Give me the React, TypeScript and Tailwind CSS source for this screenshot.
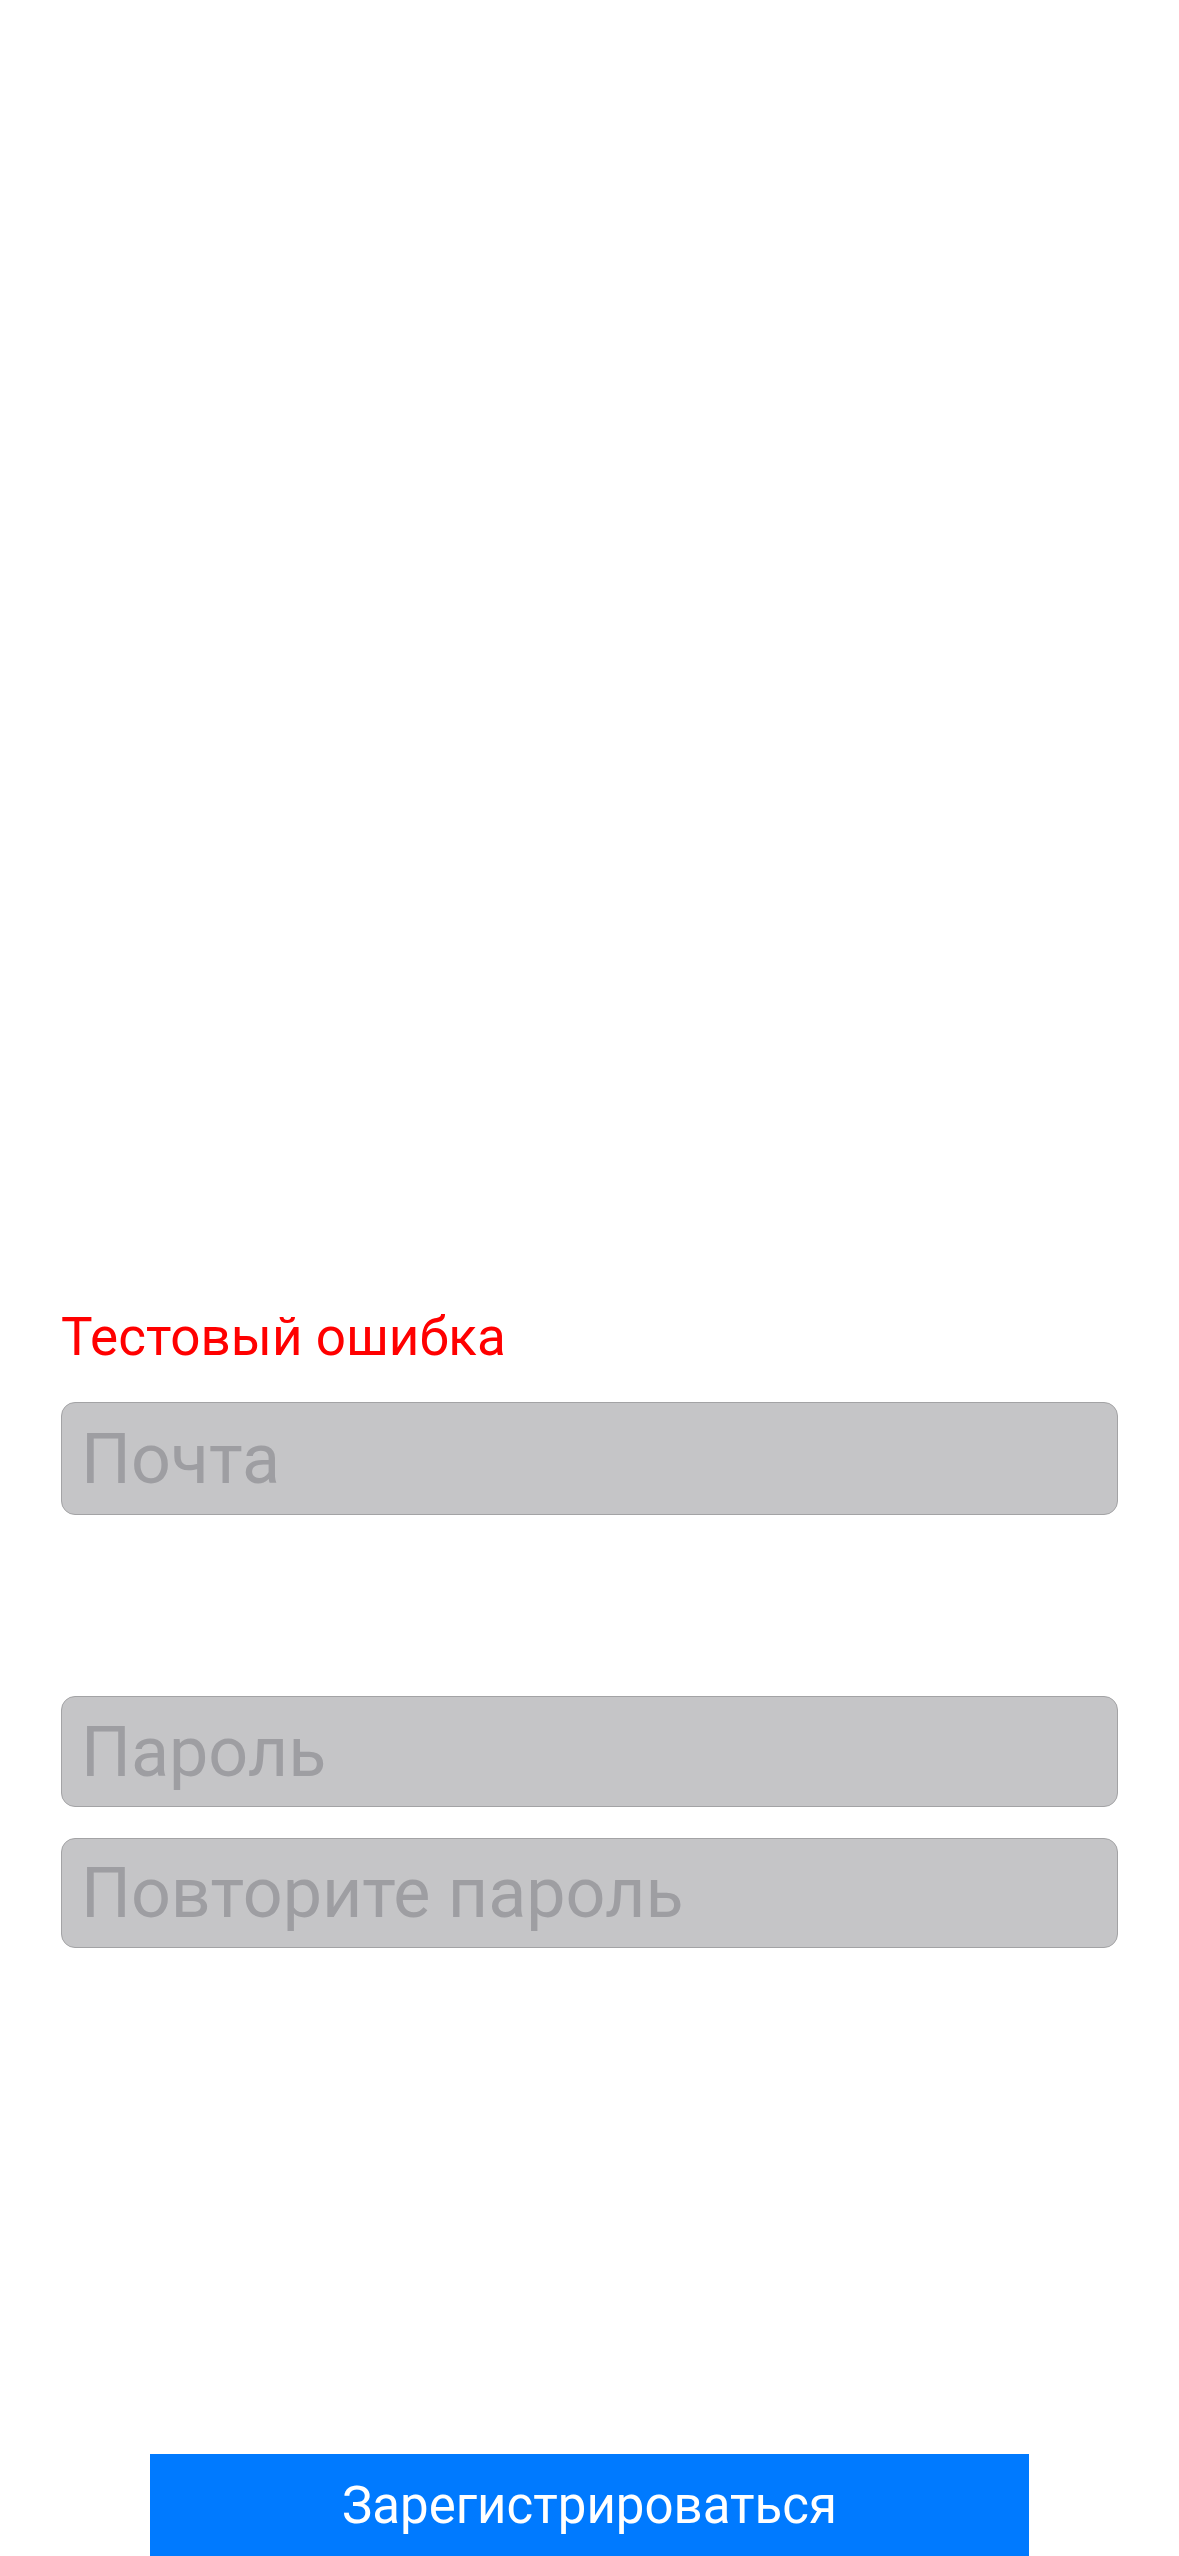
import { useState } from 'react';

const font = { fontFamily: 'Roboto, "Liberation Sans", sans-serif' };

const Field = ({ placeholder, type = 'text', h }: { placeholder: string; type?: string; h: string }) => {
  const [value, setValue] = useState('');
  return (
    <input
      type={type}
      value={value}
      onChange={(e) => setValue(e.target.value)}
      placeholder={placeholder}
      className={`w-full ${h} rounded-[14px] border border-[#a3a3a5] bg-[#c5c5c7] pl-[19px] text-[70px] text-[#333] placeholder:text-[#9e9ea2] outline-none`}
      style={font}
    />
  );
};

export default function App() {
  return (
    <div className="flex h-[2556px] w-full flex-col overflow-hidden bg-white" style={font}>
      {/* Form */}
      <div className="flex flex-col px-[61px] pt-[1306px]">
        <p className="text-[53px] leading-[63px] text-[#ff0000]">Тестовый ошибка</p>
        <div className="mt-[33px]">
          <Field placeholder="Почта" h="h-[113px]" />
        </div>
        <div className="mt-[181px]">
          <Field placeholder="Пароль" type="password" h="h-[111px]" />
        </div>
        <div className="mt-[31px]">
          <Field placeholder="Повторите пароль" type="password" h="h-[110px]" />
        </div>
      </div>

      {/* Submit */}
      <div className="mt-auto flex justify-center">
        <button className="h-[102px] w-[879px] bg-[#007aff] pt-[2px] text-[51px] text-white">
          Зарегистрироваться
        </button>
      </div>
    </div>
  );
}
